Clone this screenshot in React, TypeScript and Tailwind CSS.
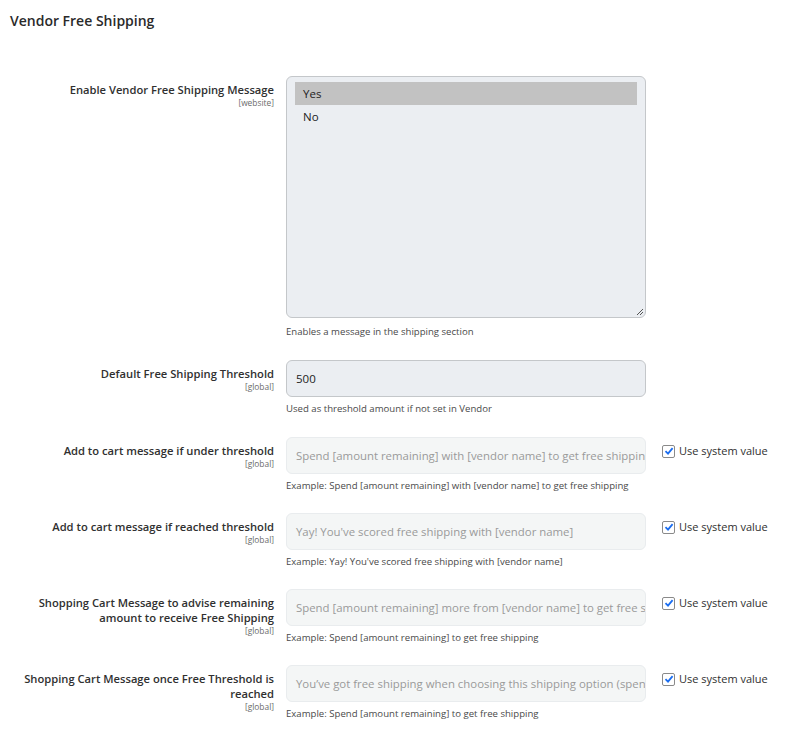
import React from 'react';

const font = { fontFamily: '"Open Sans", "Liberation Sans", sans-serif' };

function CheckBox() {
  return (
    <label className="flex items-center gap-[4px] text-[11px] text-[#303030] whitespace-nowrap">
      <span className="w-[13px] h-[13px] border border-[#8a8a8a] rounded-[2px] bg-white flex items-center justify-center">
        <svg width="10" height="10" viewBox="0 0 10 10">
          <path d="M1.5 5.2 L4 7.6 L8.6 2.2" fill="none" stroke="#1a6df0" strokeWidth="1.8" />
        </svg>
      </span>
      Use system value
    </label>
  );
}

function Label({ lines, scope }: { lines: string; scope: string }) {
  return (
    <div className="text-right pt-[6px]">
      <p className="text-[11.2px] font-semibold text-[#303030] leading-[15px]">{lines}</p>
      <p className="text-[8.4px] text-[#6b6b6b] leading-[10px] mt-[1px]">[{scope}]</p>
    </div>
  );
}

function TextRow({ label, scope, placeholder, hint }: { label: string; scope: string; placeholder: string; hint: string }) {
  return (
    <div className="grid grid-cols-[254px_360px_auto] gap-x-[12px] items-start">
      <Label lines={label} scope={scope} />
      <div>
        <div className="h-[37px] rounded-[6px] border border-[#e9ecee] bg-[#f4f6f6] flex items-center px-[9px] overflow-hidden">
          <span className="text-[11.4px] text-[#9a9a9a] whitespace-nowrap">{placeholder}</span>
        </div>
        <p className="text-[9.6px] text-[#4a4a4a] mt-[6px] leading-[12px]">{hint}</p>
      </div>
      <div className="pl-[4px] pt-[6px]">
        <CheckBox />
      </div>
    </div>
  );
}

export default function App() {
  return (
    <div className="bg-white w-[807px] h-[747px] overflow-hidden text-[#303030]" style={font}>
      <h2 className="text-[14px] font-semibold text-[#2a2a2a] pl-[10px] pt-[10px] leading-[22px]">Vendor Free Shipping</h2>
      <div className="pl-[20px] pt-[44px] flex flex-col">
        {/* select row */}
        <div className="grid grid-cols-[254px_360px] gap-x-[12px] items-start">
          <Label lines="Enable Vendor Free Shipping Message" scope="website" />
          <div>
            <div className="relative h-[242px] rounded-[6px] border border-[#c4c7ca] bg-[#ebeef2] p-[5px_8px]">
              <div className="h-[23px] bg-[#c2c2c2] flex items-center px-[8px] text-[11.5px] text-[#222]">Yes</div>
              <div className="h-[23px] flex items-center px-[8px] text-[11.5px] text-[#222]">No</div>
              <svg className="absolute right-[1px] bottom-[1px]" width="9" height="9" viewBox="0 0 9 9">
                <path d="M8 2 L2 8 M8 5 L5 8" stroke="#555" strokeWidth="1" />
              </svg>
            </div>
            <p className="text-[9.6px] text-[#4a4a4a] mt-[8px] leading-[12px]">Enables a message in the shipping section</p>
          </div>
        </div>

        <div className="grid grid-cols-[254px_360px] gap-x-[12px] items-start mt-[22px]">
          <Label lines="Default Free Shipping Threshold" scope="global" />
          <div>
            <div className="h-[37px] rounded-[6px] border border-[#c4c7ca] bg-[#ebeef2] flex items-center px-[9px]">
              <span className="text-[11.5px] text-[#222]">500</span>
            </div>
            <p className="text-[9.6px] text-[#4a4a4a] mt-[6px] leading-[12px]">Used as threshold amount if not set in Vendor</p>
          </div>
        </div>

        <div className="mt-[22px] flex flex-col gap-[21px]">
          <TextRow
            label="Add to cart message if under threshold"
            scope="global"
            placeholder="Spend [amount remaining] with [vendor name] to get free shipping"
            hint="Example: Spend [amount remaining] with [vendor name] to get free shipping"
          />
          <TextRow
            label="Add to cart message if reached threshold"
            scope="global"
            placeholder="Yay! You've scored free shipping with [vendor name]"
            hint="Example: Yay! You've scored free shipping with [vendor name]"
          />
          <TextRow
            label="Shopping Cart Message to advise remaining amount to receive Free Shipping"
            scope="global"
            placeholder="Spend [amount remaining] more from [vendor name] to get free shipping"
            hint="Example: Spend [amount remaining] to get free shipping"
          />
          <TextRow
            label="Shopping Cart Message once Free Threshold is reached"
            scope="global"
            placeholder="You’ve got free shipping when choosing this shipping option (spend [amount remaining])"
            hint="Example: Spend [amount remaining] to get free shipping"
          />
        </div>
      </div>
    </div>
  );
}
